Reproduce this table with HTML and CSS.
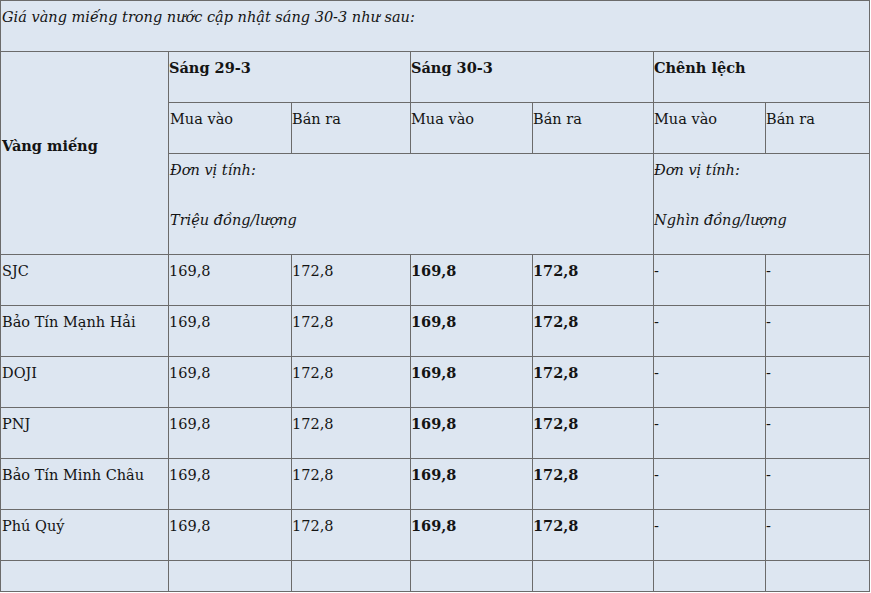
FILE: index.html
```html
<!DOCTYPE html>
<html lang="vi">
<head>
<meta charset="utf-8">
<link rel="stylesheet" href="styles.css">
</head>
<body>
<table class="gold">
  <colgroup>
    <col class="c-name"><col class="c-a"><col class="c-b"><col class="c-c"><col class="c-d"><col class="c-e"><col class="c-f">
  </colgroup>
  <tr class="r-cap"><td colspan="7"><em>Giá vàng miếng trong nước cập nhật sáng 30-3 như sau:</em></td></tr>
  <tr class="r-std">
    <td rowspan="3" class="name-head"><strong>Vàng miếng</strong></td>
    <td colspan="2"><strong>Sáng 29-3</strong></td>
    <td colspan="2"><strong>Sáng 30-3</strong></td>
    <td colspan="2"><strong>Chênh lệch</strong></td>
  </tr>
  <tr class="r-std">
    <td>Mua vào</td><td>Bán ra</td><td>Mua vào</td><td>Bán ra</td><td>Mua vào</td><td>Bán ra</td>
  </tr>
  <tr class="r-unit">
    <td colspan="4"><p><em>Đơn vị tính:</em></p><p><em>Triệu đồng/lượng</em></p></td>
    <td colspan="2"><p><em>Đơn vị tính:</em></p><p><em>Nghìn đồng/lượng</em></p></td>
  </tr>
  <tr class="r-std"><td>SJC</td><td>169,8</td><td>172,8</td><td><strong>169,8</strong></td><td><strong>172,8</strong></td><td>-</td><td>-</td></tr>
  <tr class="r-std"><td>Bảo Tín Mạnh Hải</td><td>169,8</td><td>172,8</td><td><strong>169,8</strong></td><td><strong>172,8</strong></td><td>-</td><td>-</td></tr>
  <tr class="r-std"><td>DOJI</td><td>169,8</td><td>172,8</td><td><strong>169,8</strong></td><td><strong>172,8</strong></td><td>-</td><td>-</td></tr>
  <tr class="r-std"><td>PNJ</td><td>169,8</td><td>172,8</td><td><strong>169,8</strong></td><td><strong>172,8</strong></td><td>-</td><td>-</td></tr>
  <tr class="r-std"><td>Bảo Tín Minh Châu</td><td>169,8</td><td>172,8</td><td><strong>169,8</strong></td><td><strong>172,8</strong></td><td>-</td><td>-</td></tr>
  <tr class="r-std"><td>Phú Quý</td><td>169,8</td><td>172,8</td><td><strong>169,8</strong></td><td><strong>172,8</strong></td><td>-</td><td>-</td></tr>
  <tr class="r-end"><td></td><td></td><td></td><td></td><td></td><td></td><td></td></tr>
</table>
</body>
</html>
```

FILE: styles.css
```css
html, body {
  margin: 0;
  padding: 0;
  background: #ffffff;
}
.gold {
  border-collapse: collapse;
  table-layout: fixed;
  width: 870px;
  font-family: "DejaVu Serif", "Liberation Serif", serif;
  font-size: 14.5px;
  color: #141414;
  background: #dde6f1;
}
.c-name { width: 168px; }
.c-a { width: 123px; }
.c-b { width: 119px; }
.c-c { width: 122px; }
.c-d { width: 121px; }
.c-e { width: 112px; }
.c-f { width: 104px; }
.gold td {
  border: 1px solid #6b6b6b;
  vertical-align: top;
  padding: 6px 1px 0 0;
  line-height: 20px;
  white-space: nowrap;
  overflow: hidden;
}
.gold td:first-child { padding-left: 1px; }
.gold p { margin: 0 0 30px 0; }
.gold p:last-child { margin-bottom: 0; }
.r-cap td { height: 44px; }
.r-std td { height: 44px; }
.r-unit td { height: 94px; }
.r-end td { height: 30px; padding: 0; }
.gold td.name-head {
  vertical-align: middle;
  padding-bottom: 20px;
}
strong { font-weight: 700; }
```
